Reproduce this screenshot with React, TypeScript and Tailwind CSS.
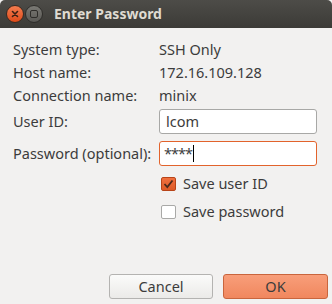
import React from "react";

export default function App() {
  const font = { fontFamily: '"Noto Sans", "Open Sans", sans-serif' };
  return (
    <div className="w-[332px] h-[304px] bg-[#f2f1f0] flex flex-col overflow-hidden text-[#3c3c3c]" style={font}>
      <div className="h-[28px] flex items-center bg-gradient-to-b from-[#4d4c48] to-[#3c3b37] rounded-t-[5px] px-[6px] gap-[1px]">
        <div className="w-[18px] h-[18px] rounded-full bg-gradient-to-b from-[#f37c4e] to-[#df4a16] border border-[#3a2a22] flex items-center justify-center">
          <svg width="8" height="8" viewBox="0 0 8 8">
            <path d="M1.5 1.5 L6.5 6.5 M6.5 1.5 L1.5 6.5" stroke="#3b2014" strokeWidth="1.6" strokeLinecap="round" />
          </svg>
        </div>
        <div className="w-[18px] h-[18px] rounded-full bg-gradient-to-b from-[#7a7974] to-[#5a5955] border border-[#2f2e2b] flex items-center justify-center">
          <div className="w-[8px] h-[8px] rounded-[2px] border-[1.5px] border-[#2e2d2a]" />
        </div>
        <div className="ml-[10px] text-[14px] font-bold text-[#dfdbd2] leading-none">Enter Password</div>
      </div>
      <div className="flex flex-col pl-[13px] pr-[15px] pt-[10px] text-[14.5px]">
        <div className="flex items-center h-[23px]">
          <div className="w-[146px]">System type:</div>
          <div>SSH Only</div>
        </div>
        <div className="flex items-center h-[23px]">
          <div className="w-[146px]">Host name:</div>
          <div>172.16.109.128</div>
        </div>
        <div className="flex items-center h-[23px]">
          <div className="w-[146px]">Connection name:</div>
          <div>minix</div>
        </div>
        <div className="flex items-center h-[25px] mt-[2px]">
          <div className="w-[146px]">User ID:</div>
          <div className="w-[158px] h-[25px] bg-white border border-[#a8a8a6] rounded-[3px] flex items-center px-[6px]">lcom</div>
        </div>
        <div className="flex items-center h-[25px] mt-[7px]">
          <div className="w-[146px]">Password (optional):</div>
          <div className="w-[158px] h-[25px] bg-white border border-[#e2632c] rounded-[3px] flex items-center px-[4px]">
            <span className="tracking-[-1px]">****</span>
            <span className="w-[1px] h-[17px] bg-black ml-[1px]" />
          </div>
        </div>
        <div className="flex items-center h-[16px] mt-[10px] pl-[148px]">
          <div className="w-[15px] h-[14px] rounded-[2px] bg-gradient-to-b from-[#f0703e] to-[#dd5a26] border border-[#b84418] flex items-center justify-center">
            <svg width="11" height="10" viewBox="0 0 11 10">
              <path d="M1.5 5 L4.3 8 L9.5 1.5" stroke="#4a2a1c" strokeWidth="1.8" fill="none" />
            </svg>
          </div>
          <div className="ml-[7px]">Save user ID</div>
        </div>
        <div className="flex items-center h-[16px] mt-[12px] pl-[148px]">
          <div className="w-[15px] h-[14px] rounded-[2px] bg-white border border-[#a9a9a7]" />
          <div className="ml-[7px]">Save password</div>
        </div>
      </div>
      <div className="flex-1" />
      <div className="flex justify-end gap-[10px] pr-[4px] pb-[5px]">
        <div className="w-[104px] h-[25px] rounded-[3px] border border-[#b4b3b1] bg-gradient-to-b from-[#fbfbfa] to-[#ebeae8] flex items-center justify-center text-[14.5px]">Cancel</div>
        <div className="w-[105px] h-[25px] rounded-[3px] border border-[#c9653d] bg-gradient-to-b from-[#f89e7a] to-[#f0875e] flex items-center justify-center text-[14.5px]">OK</div>
      </div>
    </div>
  );
}
